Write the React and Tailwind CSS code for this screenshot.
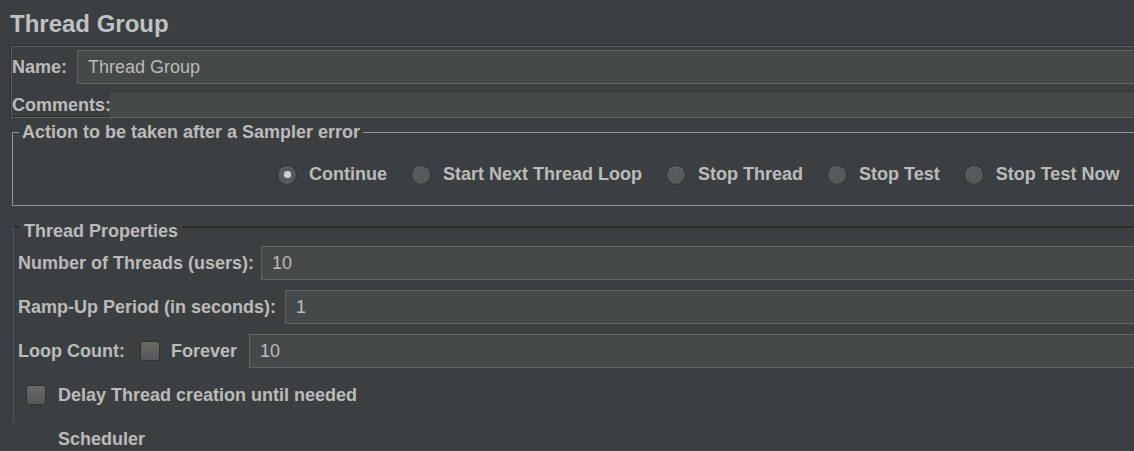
import React from 'react';

const Radio = ({ checked }) => (
  <span className="relative flex items-center justify-center w-[20px] h-[20px] rounded-full bg-[#575a5c] border border-[#2e3031] shadow-[inset_0_1px_0_#66696b]">
    {checked ? (
      <span className="w-[7px] h-[7px] rounded-full bg-[#c9d0d6] shadow-[0_0_1px_#7aa0c4]" />
    ) : (
      <span className="w-[2px] h-[2px] rounded-full bg-[#4d6a86]" />
    )}
  </span>
);

const Checkbox = () => (
  <span className="block w-[20px] h-[20px] rounded-[3px] bg-gradient-to-b from-[#6b6a62] to-[#54575a] border border-[#2f3132]" />
);

const Field = ({ value, className }) => (
  <div className={`flex-1 h-[34px] flex items-center pl-[10px] bg-[#45494a] border border-[#626566] font-normal ${className || ''}`}>
    {value}
  </div>
);

export default function App() {
  const actions = [
    { label: 'Continue', checked: true },
    { label: 'Start Next Thread Loop', checked: false },
    { label: 'Stop Thread', checked: false },
    { label: 'Stop Test', checked: false },
    { label: 'Stop Test Now', checked: false }
  ];

  return (
    <div className="w-[1134px] h-[451px] overflow-hidden bg-[#3c3f41] text-[#bbbbbb] font-['Liberation_Sans',Arial,sans-serif] text-[18px] leading-[21px] font-bold">
      <h1 className="pl-[10px] pt-[10px] text-[24px] leading-[28px] font-bold text-[#bfc2c4]">Thread Group</h1>

      {/* name / comments */}
      <div className="ml-[10px] mr-[-60px] mt-[7px] border border-t-[#2b2d2e] border-l-[#2b2d2e] border-b-[#626566] border-r-[#626566] shadow-[inset_1px_1px_0_#5e6163,inset_0_-1px_0_#2b2d2e]">
        <div className="flex items-center gap-[10px] pl-[1px] pt-[4px]">
          <span>Name:</span>
          <Field value="Thread Group" />
        </div>
        <div className="flex items-center mt-[9px] pl-[1px]">
          <span className="w-[98px] shrink-0">Comments:</span>
          <div className="flex-1 h-[24px] bg-[#45494a]" />
        </div>
      </div>

      {/* action after sampler error */}
      <fieldset className="ml-[12px] mr-[-60px] mt-[4px] border border-[#8b99a3] pb-[20px]">
        <legend className="ml-[6px] px-[3px]">Action to be taken after a Sampler error</legend>
        <div className="flex items-center gap-[24px] pl-[264px] mt-[21px]">
          {actions.map(a => (
            <div key={a.label} className="flex items-center gap-[12px]">
              <Radio checked={a.checked} />
              <span>{a.label}</span>
            </div>
          ))}
        </div>
      </fieldset>

      {/* thread properties */}
      <fieldset className="ml-[13px] mr-[-60px] mt-[6px] border-0 border-t-[2px] border-l border-t-[#2b2d2e] border-l-[#56595b] pb-[10px] pl-[4px]">
        <legend className="ml-[2px] px-[4px] pt-[9px]">Thread Properties</legend>
        <div className="flex flex-col gap-[10px] mt-[4px]">
          <div className="flex items-center gap-[7px]">
            <span>Number of Threads (users):</span>
            <Field value="10" />
          </div>
          <div className="flex items-center gap-[9px]">
            <span>Ramp-Up Period (in seconds):</span>
            <Field value="1" />
          </div>
          <div className="flex items-center">
            <span>Loop Count:</span>
            <span className="ml-[15px]"><Checkbox /></span>
            <span className="ml-[11px]">Forever</span>
            <Field value="10" className="ml-[12px]" />
          </div>
          <div className="flex items-center h-[34px] pl-[8px] gap-[12px]">
            <Checkbox />
            <span>Delay Thread creation until needed</span>
          </div>
        </div>
      </fieldset>

      <div className="pl-[58px] mt-[7px]">Scheduler</div>
    </div>
  );
}
